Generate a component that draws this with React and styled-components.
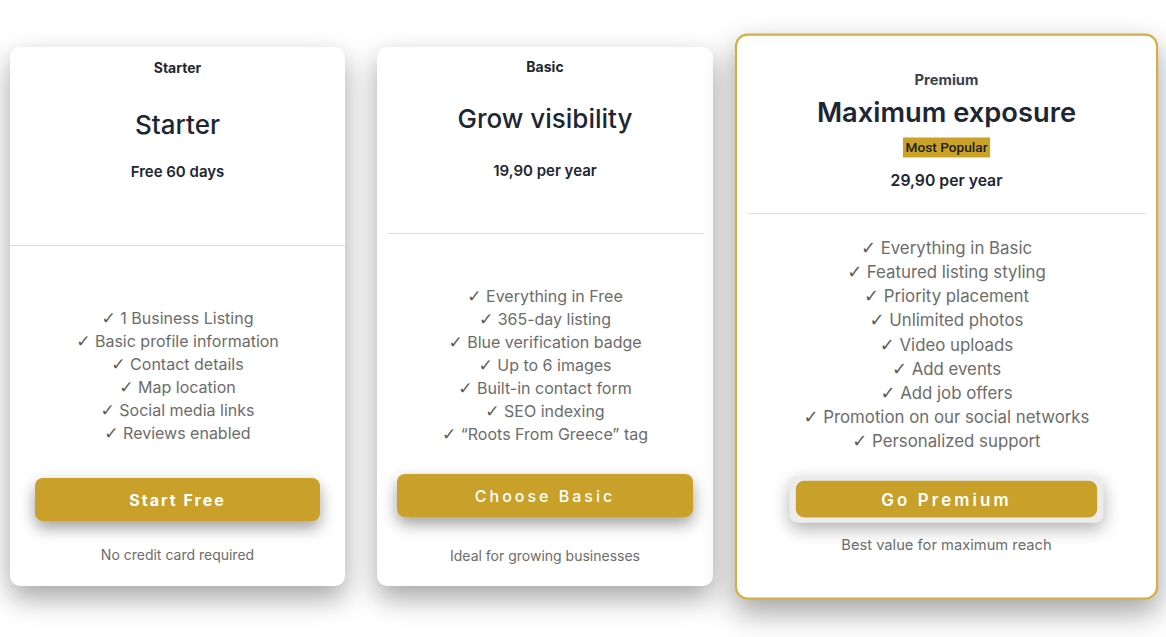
import React from 'react';
import styled, { createGlobalStyle, css } from 'styled-components';

const GlobalStyle = createGlobalStyle`
  html, body { margin: 0; padding: 0; background: #fff; }
  body { font-family: Inter, "Noto Sans", sans-serif; }
  * { box-sizing: border-box; }
`;

const Page = styled.div`
  display: flex;
  align-items: stretch;
  gap: 32px;
  padding: 47px 0 0 10px;
  height: 637px;
  overflow: hidden;
`;

const Card = styled.div`
  width: ${p => p.$w}px;
  height: 539px;
  background: #fff;
  border-radius: 10px;
  box-shadow: 0 12px 28px rgba(0, 0, 0, 0.36);
  display: flex;
  flex-direction: column;
  align-items: center;
  text-align: center;
  ${p => p.$featured && css`
    border: 2px solid #d4ad45;
    border-radius: 12px;
    transform: scale(1.05);
  `}
`;

const Header = styled.div`
  width: 100%;
  display: flex;
  flex-direction: column;
  align-items: center;
  padding-top: ${p => p.$pt}px;
  height: ${p => p.$h}px;
`;

const Label = styled.div`
  font-size: 14px;
  line-height: 17px;
  font-weight: 700;
  color: ${p => (p.$muted ? '#3a4250' : '#1f2630')};
`;

const Title = styled.h2`
  margin: ${p => p.$mt}px 0 0;
  font-size: 26px;
  line-height: 32px;
  font-weight: ${p => p.$weight || 500};
  color: #1d2633;
`;

const Badge = styled.span`
  margin-top: 8px;
  padding: 0 2px;
  background: #c9a227;
  font-family: Roboto, Inter, sans-serif;
  font-size: 13px;
  line-height: 19px;
  font-weight: 500;
  color: #1d1d1d;
`;

const Price = styled.div`
  margin-top: ${p => p.$mt}px;
  font-size: 15px;
  line-height: 20px;
  font-weight: 600;
  color: #1d2633;
`;

const Divider = styled.hr`
  align-self: stretch;
  margin: 0 ${p => p.$inset}px;
  border: 0;
  border-top: 1px solid #dcdcdc;
`;

const Features = styled.ul`
  list-style: none;
  margin: ${p => p.$mt}px 0 0;
  padding: 0;
  font-size: 16px;
  line-height: 23px;
  color: #6c6c6c;
`;

const Feature = styled.li`
  height: 23px;
`;

const Check = styled.span`
  display: inline-block;
  font-family: "DejaVu Sans", sans-serif;
  font-size: 17px;
  line-height: 1;
  color: #5a5a5a;
`;

const ButtonWrap = styled.div`
  margin-top: ${p => p.$mt}px;
  ${p => p.$framed && css`
    padding: 5px 6px;
    background: #ececec;
    border-radius: 8px;
    box-shadow: 0 6px 16px rgba(0, 0, 0, 0.3);
  `}
`;

const CTA = styled.button`
  display: block;
  width: ${p => p.$w}px;
  height: ${p => p.$h}px;
  border: 0;
  border-radius: 8px;
  background: #c9a12a;
  color: #fff;
  font-family: Inter, sans-serif;
  font-size: 16px;
  font-weight: ${p => p.$weight};
  letter-spacing: ${p => p.$ls}px;
  box-shadow: ${p => (p.$flat ? 'none' : '0 7px 16px rgba(0, 0, 0, 0.38)')};
  cursor: pointer;
`;

const Note = styled.p`
  margin: ${p => p.$mt}px 0 0;
  font-size: 14px;
  line-height: 20px;
  color: #6c6c6c;
`;

const plans = [
  {
    w: 335,
    label: 'Starter',
    title: 'Starter',
    price: 'Free 60 days',
    head: { pt: 12, h: 198, titleMt: 33, priceMt: 21 },
    inset: 0,
    features: [
      '1 Business Listing',
      'Basic profile information',
      'Contact details',
      'Map location',
      'Social media links',
      'Reviews enabled',
    ],
    featMt: 61,
    cta: { text: 'Start Free', w: 285, h: 43, weight: 700, ls: 2, mt: 33 },
    note: 'No credit card required',
    noteMt: 24,
  },
  {
    w: 336,
    label: 'Basic',
    title: 'Grow visibility',
    price: '19,90 per year',
    head: { pt: 11, h: 186, titleMt: 28, priceMt: 26 },
    inset: 10,
    features: [
      'Everything in Free',
      '365-day listing',
      'Blue verification badge',
      'Up to 6 images',
      'Built-in contact form',
      'SEO indexing',
      '“Roots From Greece” tag',
    ],
    featMt: 51,
    cta: { text: 'Choose Basic', w: 296, h: 43, weight: 500, ls: 3, mt: 28 },
    note: 'Ideal for growing businesses',
    noteMt: 29,
  },
  {
    w: 403,
    featured: true,
    label: 'Premium',
    title: 'Maximum exposure',
    price: '29,90 per year',
    badge: 'Most Popular',
    head: { pt: 33, h: 169, titleMt: 7, priceMt: 12 },
    inset: 10,
    features: [
      'Everything in Basic',
      'Featured listing styling',
      'Priority placement',
      'Unlimited photos',
      'Video uploads',
      'Add events',
      'Add job offers',
      'Promotion on our social networks',
      'Personalized support',
    ],
    featMt: 21,
    cta: { text: 'Go Premium', w: 287, h: 35, weight: 600, ls: 3, mt: 21, framed: true },
    note: 'Best value for maximum reach',
    noteMt: 11,
  },
];

const PlanCard = ({ plan }) => (
  <Card $w={plan.w} $featured={plan.featured}>
    <Header $pt={plan.head.pt} $h={plan.head.h}>
      <Label $muted={plan.featured}>{plan.label}</Label>
      <Title $mt={plan.head.titleMt} $weight={plan.featured ? 600 : 500}>{plan.title}</Title>
      {plan.badge ? <Badge>{plan.badge}</Badge> : null}
      <Price $mt={plan.head.priceMt}>{plan.price}</Price>
    </Header>
    <Divider $inset={plan.inset} />
    <Features $mt={plan.featMt}>
      {plan.features.map(f => (
        <Feature key={f}><Check>✓</Check> {f}</Feature>
      ))}
    </Features>
    <ButtonWrap $mt={plan.cta.mt} $framed={plan.cta.framed}>
      <CTA
        $w={plan.cta.w}
        $h={plan.cta.h}
        $weight={plan.cta.weight}
        $ls={plan.cta.ls}
        $flat={plan.cta.framed}
      >
        {plan.cta.text}
      </CTA>
    </ButtonWrap>
    <Note $mt={plan.noteMt}>{plan.note}</Note>
  </Card>
);

const App = () => (
  <>
    <GlobalStyle />
    <Page>
      {plans.map(p => (
        <PlanCard key={p.label} plan={p} />
      ))}
    </Page>
  </>
);

export default App;
